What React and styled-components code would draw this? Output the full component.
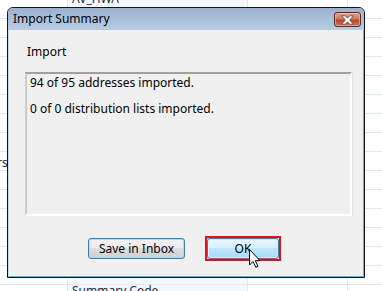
import React from "react";
import styled, { createGlobalStyle } from "styled-components";

const GlobalStyle = createGlobalStyle`
  html, body {
    margin: 0;
    padding: 0;
    background: #ffffff;
  }
  body {
    font-family: "Noto Sans", "Open Sans", sans-serif;
  }
`;

const Desktop = styled.div`
  position: relative;
  width: 382px;
  height: 291px;
  overflow: hidden;
  background-color: #ffffff;
  background-image:
    linear-gradient(to right, transparent 67px, #dbe8f7 67px, #dbe8f7 68px, transparent 68px),
    linear-gradient(to right, transparent 247px, #dbe8f7 247px, #dbe8f7 248px, transparent 248px),
    linear-gradient(to right, transparent 347px, #dbe8f7 347px, #dbe8f7 348px, transparent 348px),
    repeating-linear-gradient(to bottom, transparent 0, transparent 18px, #dbe8f7 18px, #dbe8f7 19px),
    linear-gradient(to right, transparent 68px, #f3f8fe 68px, #f3f8fe 247px, transparent 247px);
  font-family: "Noto Sans", "Open Sans", sans-serif;
  font-size: 12px;
  color: #000;
`;

const CellText = styled.span`
  position: absolute;
  left: ${(p) => p.$x}px;
  top: ${(p) => p.$y}px;
  font-size: 12px;
  line-height: 16px;
  color: #1b2a44;
  white-space: nowrap;
`;

const Window = styled.div`
  position: absolute;
  left: 7px;
  top: 7px;
  width: 356px;
  height: 269px;
  border: 1px solid #141414;
  border-radius: 6px 6px 0 0;
  display: flex;
  flex-direction: column;
  overflow: hidden;
  background: #f0f0f0;
`;

const TitleBar = styled.div`
  height: 22px;
  flex: none;
  display: flex;
  align-items: center;
  justify-content: space-between;
  padding: 0 3px 0 5px;
  background: linear-gradient(to bottom, #9ab2cf 0%, #a9c0da 50%, #b7cde4 100%);
  border-radius: 5px 5px 0 0;
`;

const Title = styled.span`
  font-size: 12px;
  color: #000;
  line-height: 16px;
`;

const CloseButton = styled.div`
  width: 25px;
  height: 13px;
  border: 1px solid #5e2a22;
  border-radius: 3px;
  background: linear-gradient(to bottom, #dca28f 0%, #c97a64 45%, #b9452c 55%, #d0735a 100%);
  box-shadow: inset 0 0 0 1px rgba(255, 215, 200, 0.5);
  display: flex;
  align-items: center;
  justify-content: center;
  margin-top: 1px;
`;

const Body = styled.div`
  flex: 1;
  display: flex;
  flex-direction: column;
  border-left: 1px solid #c6d9ee;
  border-right: 1px solid #3ec3ee;
  border-bottom: 1px solid #3ec3ee;
  padding: 14px 0 0 16px;
`;

const Label = styled.div`
  font-size: 12px;
  line-height: 16px;
  margin-left: 2px;
`;

const GroupBox = styled.div`
  width: 320px;
  height: 139px;
  margin-top: 12px;
  border-top: 2px solid #a0a0a0;
  border-left: 1px solid #d0d0d0;
  border-right: 2px solid #ffffff;
  border-bottom: 2px solid #ffffff;
  box-shadow: inset 1px 0 0 #c8c8c8, 1px 0 0 #e3e3e3;
  padding: 1px 0 0 4px;
  display: flex;
  flex-direction: column;
  gap: 10px;
`;

const Line = styled.div`
  font-size: 12px;
  line-height: 16px;
`;

const ButtonRow = styled.div`
  display: flex;
  align-items: center;
  gap: 20px;
  margin-top: 20px;
  padding-left: 63px;
`;

const FocusFrame = styled.div`
  border: 2px solid #e3101e;
  display: flex;
`;

const Button = styled.div`
  width: ${(p) => p.$w}px;
  height: 19px;
  border: 1px solid #3c7fb1;
  border-radius: 3px;
  display: flex;
  align-items: center;
  justify-content: center;
  font-size: 12px;
  line-height: 16px;
  color: #000;
  background: ${(p) =>
    p.$hover
      ? "linear-gradient(to bottom, #eaf6fd 0%, #d9f0fc 50%, #bee6fd 50%, #a7d9f5 100%)"
      : "linear-gradient(to bottom, #f2f2f2 0%, #ebebeb 50%, #dddddd 50%, #cfcfcf 100%)"};
  box-shadow: ${(p) =>
    p.$hover ? "inset 0 0 0 1px #d8effb" : "inset 0 0 0 1px #9be2f6"};
`;

const Cursor = styled.svg`
  position: absolute;
  left: 249px;
  top: 249px;
`;

function CloseGlyph() {
  return (
    <svg width="15" height="10" viewBox="0 0 15 10">
      <path
        d="M1.5 0.8 L5.2 0.8 L7.5 3.2 L9.8 0.8 L13.5 0.8 L9.6 5 L13.5 9.2 L9.8 9.2 L7.5 6.8 L5.2 9.2 L1.5 9.2 L5.4 5 Z"
        fill="#ffffff"
        stroke="#6b4038"
        strokeWidth="0.8"
        strokeLinejoin="round"
      />
    </svg>
  );
}

export default function App() {
  return (
    <Desktop>
      <GlobalStyle />
      <CellText $x={72} $y={-9}>AV_HWA</CellText>
      <CellText $x={-3} $y={155}>rs</CellText>
      <CellText $x={72} $y={283}>Summary Code</CellText>
      <Window>
        <TitleBar>
          <Title>Import Summary</Title>
          <CloseButton>
            <CloseGlyph />
          </CloseButton>
        </TitleBar>
        <Body>
          <Label>Import</Label>
          <GroupBox>
            <Line>94 of 95 addresses imported.</Line>
            <Line>0 of 0 distribution lists imported.</Line>
          </GroupBox>
          <ButtonRow>
            <Button $w={95}>Save in Inbox</Button>
            <FocusFrame>
              <Button $w={70} $hover>OK</Button>
            </FocusFrame>
          </ButtonRow>
        </Body>
      </Window>
      <Cursor width="13" height="19" viewBox="0 0 13 19">
        <path
          d="M0.5 0.5 L0.5 16 L4 12.5 L6.8 18.3 L9 17.3 L6.3 11.7 L11 11.7 Z"
          fill="#ffffff"
          stroke="#000000"
          strokeWidth="1"
          strokeLinejoin="miter"
        />
      </Cursor>
    </Desktop>
  );
}
